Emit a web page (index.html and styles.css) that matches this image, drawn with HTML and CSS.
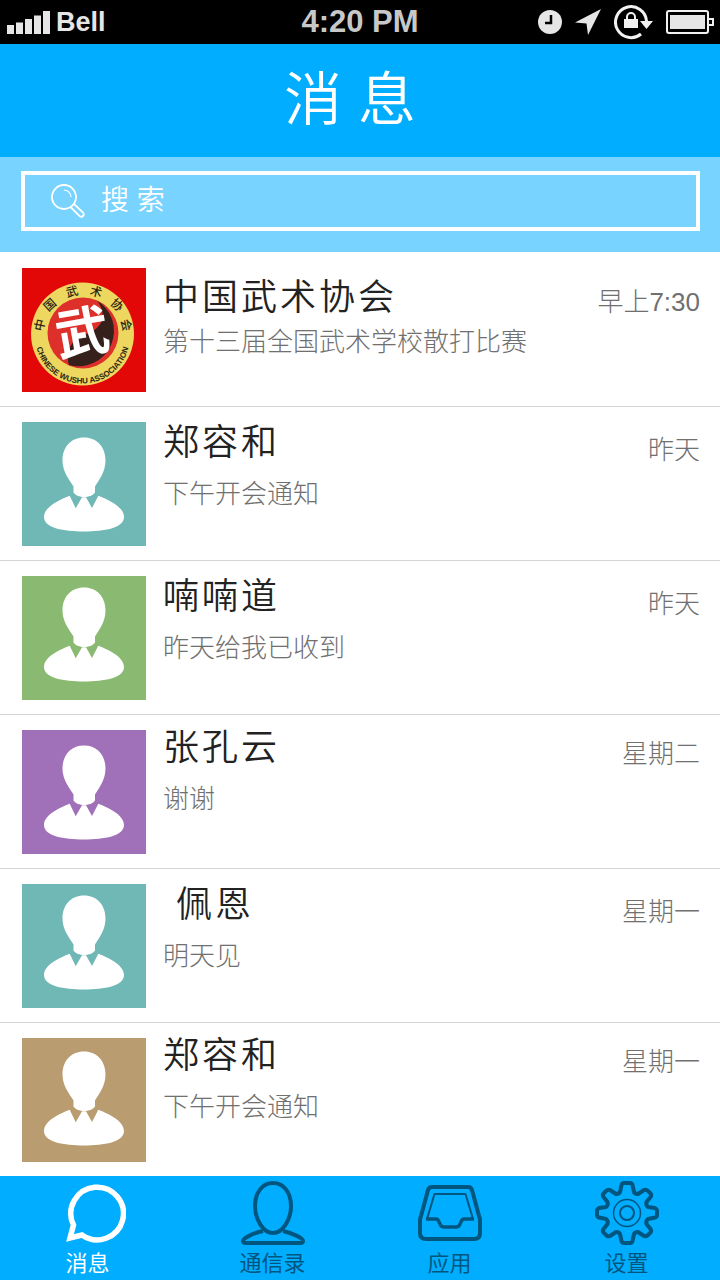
FILE: index.html
```html
<!DOCTYPE html>
<html lang="zh-CN">
<head>
    <meta charset="UTF-8">
    <meta name="viewport" content="width=device-width, initial-scale=1.0">
    <title>消息</title>
    <link rel="stylesheet" href="styles.css">
</head>
<body>

    <!-- shared drawings -->
    <svg class="defs" aria-hidden="true">
        <symbol id="person" viewBox="0 0 124 124" overflow="visible">
            <path d="M62 15.5C75 15.5 83.5 25 83.5 38.5C83.5 50 77.5 57 73 64.5V70.5C69 76.5 55.5 76.5 51.5 70.5V64.5C47 57 40.5 50 40.5 38.5C40.5 25 49 15.5 62 15.5Z"/>
            <path d="M47.7 73.7C34 79 22 86 22 95C22 106 42 109.5 62 109.5S102 106 102 95C102 86 90 79 76.3 73.7L70 86L64 75.3H60L53.7 86.3Z"/>
        </symbol>
    </svg>

    <div class="status-bar">
        <div class="carrier">
            <svg width="44" height="24" viewBox="0 0 44 24" fill="#e6e6e6">
                <path d="M1 15h7v9H1zM10 12.5h7V24h-7zM19 9h7v15h-7zM28 5.5h7V24h-7zM37 1h7v23h-7z"/>
            </svg>
            <span>Bell</span>
        </div>
        <span class="clock">4:20 PM</span>
        <div class="indicators">
            <svg width="24" height="24" viewBox="0 0 24 24">
                <circle cx="12" cy="12" r="12" fill="#e6e6e6"/>
                <path d="M13 5v8H7" fill="none" stroke="#000" stroke-width="2.5"/>
            </svg>
            <svg width="26" height="26" viewBox="0 0 26 26">
                <path d="M26 0L13 26L11.5 14.5L0 13.5Z" fill="#e6e6e6"/>
            </svg>
            <svg width="39" height="36" viewBox="0 0 39 36">
                <path d="M27 30A15.5 15.5 0 1 1 32.5 17" fill="none" stroke="#f2f2f2" stroke-width="3"/>
                <path d="M26 17H39L32.5 25Z" fill="#f2f2f2"/>
                <path d="M10 15h14v9H10z" fill="#f2f2f2"/>
                <path d="M13 16v-3a4 4 0 0 1 8 0v3" fill="none" stroke="#f2f2f2" stroke-width="2"/>
            </svg>
            <svg width="48" height="24" viewBox="0 0 48 24">
                <rect x="1" y="1" width="41" height="22" rx="2" fill="none" stroke="#f2f2f2" stroke-width="2"/>
                <rect x="4" y="5" width="35" height="14" fill="#e6e6e6"/>
                <path d="M43 9h4v6h-4" fill="none" stroke="#f2f2f2" stroke-width="2"/>
            </svg>
        </div>
    </div>

    <header class="navbar">
        <h1>消 息</h1>
    </header>

    <form class="search" role="search">
        <label class="search-box" for="search">
            <svg width="34" height="34" viewBox="0 0 34 34" fill="none" stroke="#fff" stroke-width="1.8">
                <circle cx="13" cy="13" r="12"/>
                <path d="M13 6a7 7 0 0 1 7 7" stroke-width="1.2"/>
                <path d="M19 22.5L28.5 32Q30.5 33.5 32 32T32 28.5L22.5 19.5"/>
            </svg>
            <input type="text" id="search" placeholder="搜 索" aria-label="搜索">
        </label>
    </form>

    <main class="chats">
        <a class="chat chat-group" href="#">
            <svg class="avatar" viewBox="0 0 124 124">
                <rect width="124" height="124" fill="#e30808"/>
                <circle cx="60.5" cy="66" r="51.5" fill="#eed75f"/>
                <circle cx="61" cy="65" r="35.5" fill="#de302b"/>
                <path d="M75 32.5C84 44 83 58 67 65C52 71 42 79 47 97A35.5 35.5 0 0 0 75 32.5Z" fill="#35201c"/>
                <path id="ring-bottom" d="M13 68A47.5 47.5 0 0 0 108 68" fill="none"/>
                <text class="seal-cn" x="12" y="61" transform="rotate(-78 18 57)">中</text>
                <text class="seal-cn" x="22" y="41" transform="rotate(-42 28 37)">国</text>
                <text class="seal-cn" x="44" y="28" transform="rotate(-14 50 24)">武</text>
                <text class="seal-cn" x="68" y="28" transform="rotate(14 74 24)">术</text>
                <text class="seal-cn" x="89" y="41" transform="rotate(42 95 37)">协</text>
                <text class="seal-cn" x="98" y="61" transform="rotate(78 104 57)">会</text>
                <text class="seal-en"><textPath href="#ring-bottom" startOffset="50%">CHINESE WUSHU ASSOCIATION</textPath></text>
                <text class="seal-mark" x="33" y="84" transform="rotate(-10 60 64)">武</text>
            </svg>
            <div class="chat-text">
                <h2>中国武术协会</h2>
                <p>第十三届全国武术学校散打比赛</p>
            </div>
            <time>早上7:30</time>
        </a>

        <a class="chat" href="#">
            <svg class="avatar teal" viewBox="0 0 124 124"><use href="#person" width="124" height="124"/></svg>
            <div class="chat-text">
                <h2>郑容和</h2>
                <p>下午开会通知</p>
            </div>
            <time>昨天</time>
        </a>

        <a class="chat" href="#">
            <svg class="avatar green" viewBox="0 0 124 124"><use href="#person" y="-4" width="124" height="124"/></svg>
            <div class="chat-text">
                <h2>喃喃道</h2>
                <p>昨天给我已收到</p>
            </div>
            <time>昨天</time>
        </a>

        <a class="chat chat-raised" href="#">
            <svg class="avatar purple" viewBox="0 0 124 124"><use href="#person" width="124" height="124"/></svg>
            <div class="chat-text">
                <h2>张孔云</h2>
                <p>谢谢</p>
            </div>
            <time>星期二</time>
        </a>

        <a class="chat" href="#">
            <svg class="avatar teal" viewBox="0 0 124 124"><use href="#person" y="-4" width="124" height="124"/></svg>
            <div class="chat-text">
                <h2>&nbsp;佩恩</h2>
                <p>明天见</p>
            </div>
            <time>星期一</time>
        </a>

        <a class="chat chat-raised" href="#">
            <svg class="avatar brown" viewBox="0 0 124 124"><use href="#person" y="-2" width="124" height="124"/></svg>
            <div class="chat-text">
                <h2>郑容和</h2>
                <p>下午开会通知</p>
            </div>
            <time>星期一</time>
        </a>
    </main>

    <nav class="tabs">
        <a class="tab active" href="#">
            <svg width="60" height="64" viewBox="0 0 60 64" fill="none" stroke="#fff" stroke-width="5.5">
                <path d="M4 57L7.5 44A26.3 26.3 0 1 1 16 54Z"/>
            </svg>
            <span>消息</span>
        </a>
        <a class="tab" href="#">
            <svg width="64" height="64" viewBox="0 0 64 64" fill="none" stroke="#00567f" stroke-width="4">
                <path d="M32 2C43 2 50 12 50 25C50 38 42 52 32 52S14 38 14 25C14 12 21 2 32 2Z"/>
                <path d="M22 50C13 52 2 57 2 60Q2 62 5 62H59Q62 62 62 60C62 57 51 52 42 50"/>
            </svg>
            <span>通信录</span>
        </a>
        <a class="tab" href="#">
            <svg width="64" height="64" viewBox="0 0 64 64" fill="none" stroke="#00567f" stroke-width="4" stroke-linejoin="round">
                <path d="M14 6H50Q53 6 54 9L61 35Q62 37 62 40V52Q62 58 56 58H8Q2 58 2 52V40Q2 37 3 35L10 9Q11 6 14 6Z"/>
                <path d="M9 38L16.5 13H47.5L55 38" stroke-width="2"/>
                <path d="M8 38H18Q20 38 21 41L22.5 44Q23.5 46 26 46H38Q40.5 46 41.5 44L43 41Q44 38 46 38H56" stroke-width="3.5"/>
            </svg>
            <span>应用</span>
        </a>
        <a class="tab" href="#">
            <svg width="64" height="64" viewBox="0 0 64 64" fill="none" stroke="#00567f" stroke-width="4" stroke-linejoin="round">
                <path d="M29 2H35Q37 2 37.5 4L39 11Q40 13 43 13L49 9Q51 8 53 10L55 12Q57 14 55.5 16L51.5 21Q50.5 24 53 26L60 27Q62 28 62 30V34Q62 36 60 36.5L53 38Q50.5 40 51.5 43L55.5 48Q57 50 55 52L53 54Q51 56 49 55L43 51Q40 51 39 53L37.5 60Q37 62 35 62H29Q27 62 26.5 60L25 53Q24 51 21 51L15 55Q13 56 11 54L9 52Q7 50 8.5 48L12.5 43Q13.5 40 11 38L4 36.5Q2 36 2 34V30Q2 28 4 27L11 26Q13.5 24 12.5 21L8.5 16Q7 14 9 12L11 10Q13 8 15 9L21 13Q24 13 25 11L26.5 4Q27 2 29 2Z"/>
                <circle cx="32" cy="32" r="13.5" stroke-width="1.5"/>
                <circle cx="32" cy="32" r="7" stroke-width="2"/>
            </svg>
            <span>设置</span>
        </a>
    </nav>

</body>
</html>
```
FILE: styles.css
```css
* { box-sizing: border-box; }

body {
    margin: 0;
    font-family: "Liberation Sans", "Noto Sans CJK SC", sans-serif;
    font-weight: 300;
    background-color: #fff;
    color: #222;
}

h1, h2, p { margin: 0; font-weight: 350; }
a { color: inherit; text-decoration: none; }
svg { display: block; flex-shrink: 0; }

.defs { position: absolute; width: 0; height: 0; }

/* status bar */
.status-bar {
    display: grid;
    grid-template-columns: 1fr auto 1fr;
    align-items: center;
    height: 44px;
    padding: 0 6px;
    background-color: #000;
    color: #e6e6e6;
    font-weight: bold;
}

.carrier {
    display: flex;
    align-items: center;
    gap: 6px;
    font-size: 27px;
}

.clock { font-size: 31px; color: #c8c8c8; }

.indicators {
    display: flex;
    align-items: center;
    justify-content: flex-end;
    gap: 13px;
}

/* title */
.navbar {
    height: 113px;
    padding-right: 20px;
    background-color: #00adff;
    color: #fff;
    text-align: center;
}

.navbar h1 { font-size: 58px; line-height: 112px; }

/* search */
.search {
    padding: 14px 20px 21px 21px;
    background-color: #78d3ff;
}

.search-box {
    display: flex;
    align-items: center;
    gap: 16px;
    height: 60px;
    padding: 0 26px;
    border: 4px solid #fff;
}

.search input {
    flex: 1;
    min-width: 0;
    padding: 0;
    border: none;
    outline: none;
    background: none;
    color: #fff;
    font-family: inherit;
    font-size: 28px;
    font-weight: 350;
}

.search input::placeholder { color: #fff; opacity: 1; }

/* chat list */
.chat {
    display: flex;
    height: 154px;
    padding: 0 20px 0 22px;
}

.chat + .chat { border-top: 1px solid #d4d4d4; }

.avatar {
    width: 124px;
    height: 124px;
    margin-top: 15px;
    fill: #fff;
}

.chat-group .avatar { margin-top: 16px; }

.teal { background-color: #70b8b5; }
.green { background-color: #8aba71; }
.purple { background-color: #a070b8; }
.brown { background-color: #b99c70; }

.chat-text { flex: 1; padding: 12px 0 0 17px; }
.chat-raised .chat-text { padding-top: 9px; }
.chat-group .chat-text { padding-top: 22px; }

.chat h2 {
    font-size: 36px;
    line-height: 48px;
    letter-spacing: 3px;
}

.chat p {
    margin-top: 9px;
    font-size: 26px;
    font-weight: 300;
    line-height: 36px;
    color: #707070;
}

.chat-group p { margin-top: 2px; }

.chat time {
    padding-top: 25px;
    font-size: 26px;
    line-height: 36px;
    color: #707070;
}

.chat-raised time { padding-top: 21px; }
.chat-group time { padding-top: 32px; }

/* round seal on the group avatar */
.seal-cn {
    font-size: 12px;
    font-weight: 500;
    fill: #2b2411;
}

.seal-en {
    font-size: 8px;
    font-weight: bold;
    text-anchor: middle;
    fill: #2b2411;
}

.seal-mark {
    font-size: 54px;
    font-weight: 700;
    fill: #fff;
}

/* bottom tabs */
.tabs {
    display: grid;
    grid-template-columns: repeat(4, 1fr);
    padding: 5px 5px 1px 7px;
    background-color: #00adff;
    color: #00567f;
}

.tab {
    display: flex;
    flex-direction: column;
    align-items: center;
    gap: 4px;
    font-size: 22px;
    line-height: 30px;
    font-weight: 400;
}

.tab.active {
    align-items: flex-start;
    justify-self: center;
    color: #fff;
}
```
